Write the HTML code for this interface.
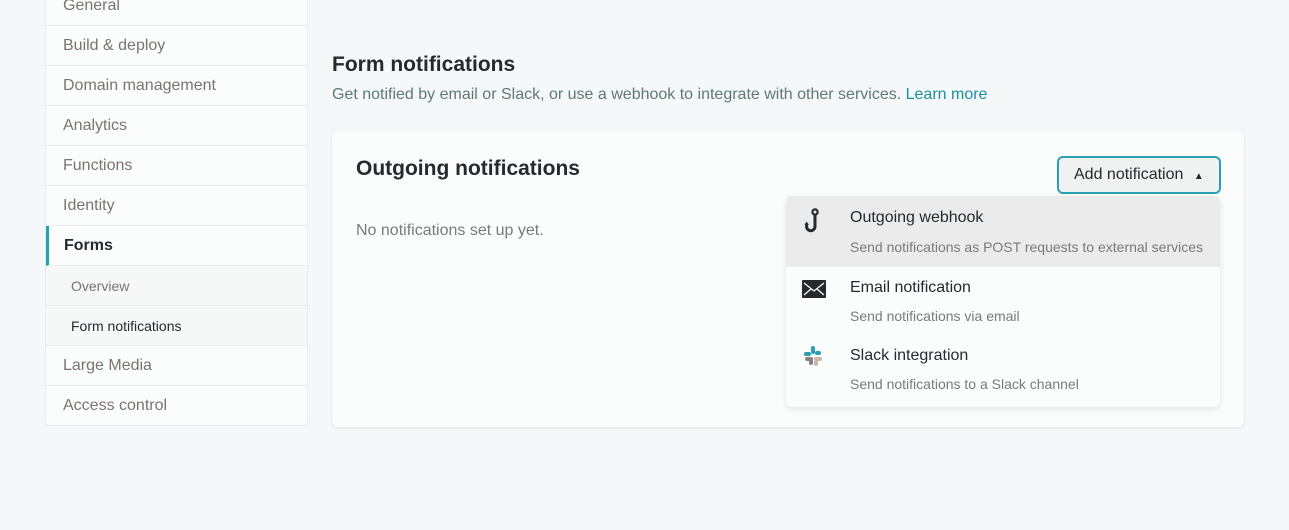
<!DOCTYPE html>
<html><head><meta charset="utf-8"><style>
*{box-sizing:border-box;margin:0;padding:0}
body{width:1289px;height:530px;background:#f5f8f8;font-family:"Liberation Sans",sans-serif;position:relative;overflow:hidden}
.side{position:absolute;left:45px;top:-14px;width:263px;height:440px;background:#fbfdfd;border:1px solid #eaeded;border-top:none;border-radius:0 0 4px 4px}
.it{height:40px;border-bottom:1px solid #eaeded;padding-left:17px;line-height:40px;font-size:16px;color:#7d7272}
.it.act{border-left:3px solid #2aa1b3;padding-left:15px;font-weight:bold;color:#252a31}
.sub{background:#f6f8f8;padding-left:25px;font-size:14px}
.sub.cur{color:#252a31}
h1{position:absolute;left:332px;top:53px;font-size:21px;font-weight:bold;color:#252a31}
.desc{position:absolute;left:332px;top:86px;font-size:16px;color:#5f7878}
.desc a{color:#1f8f9f;text-decoration:none}
.card{position:absolute;left:332px;top:131px;width:912px;height:296px;background:#fbfdfd;border-radius:6px;box-shadow:0 1px 3px rgba(0,0,0,.1)}
.card h2{position:absolute;left:24px;top:26px;font-size:21px;font-weight:bold;color:#252a31}
.none{position:absolute;left:24px;top:91px;font-size:16px;color:#7a7a7a}
.btn{position:absolute;left:1057px;top:156px;width:164px;height:38px;border:2px solid #2a9fb1;border-radius:6px;background:#f0f2f2;font-size:16px;color:#252a31;line-height:34px;padding-left:15px}
.dd{position:absolute;left:786px;top:196px;width:434px;height:211px;background:#fbfdfd;border-radius:6px;box-shadow:0 2px 6px rgba(0,0,0,.1);overflow:hidden}
.row{height:68px;position:relative}
.row.hl{background:#ebebeb;height:71px}
.t{position:absolute;left:64px;top:13px;font-size:16px;color:#252a31}
.s{position:absolute;left:64px;top:43px;font-size:14px;color:#7a7a7a}
.ic{position:absolute;left:16px;top:12px}
</style></head><body>
<div class="side">
<div class="it">General</div><div class="it">Build &amp; deploy</div><div class="it">Domain management</div><div class="it">Analytics</div><div class="it">Functions</div><div class="it">Identity</div><div class="it act">Forms</div><div class="it sub">Overview</div><div class="it sub cur">Form notifications</div><div class="it">Large Media</div><div class="it" style="border-bottom:none">Access control</div>
</div>
<h1>Form notifications</h1>
<div class="desc">Get notified by email or Slack, or use a webhook to integrate with other services. <a>Learn more</a></div>
<div class="card"><h2>Outgoing notifications</h2><div class="none">No notifications set up yet.</div></div>
<div class="btn">Add notification <span style="font-size:10px;margin-left:6px">&#9650;</span></div>
<div class="dd">
<div class="row hl"><svg class="ic" width="24" height="26" viewBox="0 0 24 26"><circle cx="13" cy="4" r="2.6" fill="none" stroke="#252a31" stroke-width="2.2"/><path d="M13 6.5V18.5a4.2 4.2 0 0 1-8.4 0v-3" fill="none" stroke="#252a31" stroke-width="3"/><path d="M2.5 17l2.2-3.5 2.2 3.5z" fill="#252a31"/></svg><div class="t">Outgoing webhook</div><div class="s">Send notifications as POST requests to external services</div></div>
<div class="row"><svg class="ic" style="top:13px" width="24" height="18" viewBox="0 0 24 18"><rect x="0" y="0" width="24" height="18" rx="1" fill="#252a31"/><path d="M2 3l10 8 10-8M2 15l7-6M22 15l-7-6" fill="none" stroke="#fff" stroke-width="1.2"/></svg><div class="t" style="top:12px">Email notification</div><div class="s" style="top:41px">Send notifications via email</div></div>
<div class="row"><svg class="ic" style="top:10px" width="22" height="22" viewBox="0 0 22 22"><rect x="9" y="1" width="4" height="8" rx="2" fill="#2a9fb1"/><rect x="13" y="6" width="6" height="4" rx="2" fill="#2a9fb1"/><rect x="2" y="7" width="7" height="4" rx="2" fill="#2a9fb1"/><rect x="3" y="12" width="6" height="4" rx="2" fill="#8a8080"/><rect x="7" y="12" width="4" height="8" rx="2" fill="#8a8080"/><rect x="12" y="12" width="8" height="4" rx="2" fill="#c9b8a8"/><rect x="12" y="15" width="4" height="6" rx="2" fill="#c9b8a8"/></svg><div class="t" style="top:12px">Slack integration</div><div class="s" style="top:41px">Send notifications to a Slack channel</div></div>
</div>
</body></html>
